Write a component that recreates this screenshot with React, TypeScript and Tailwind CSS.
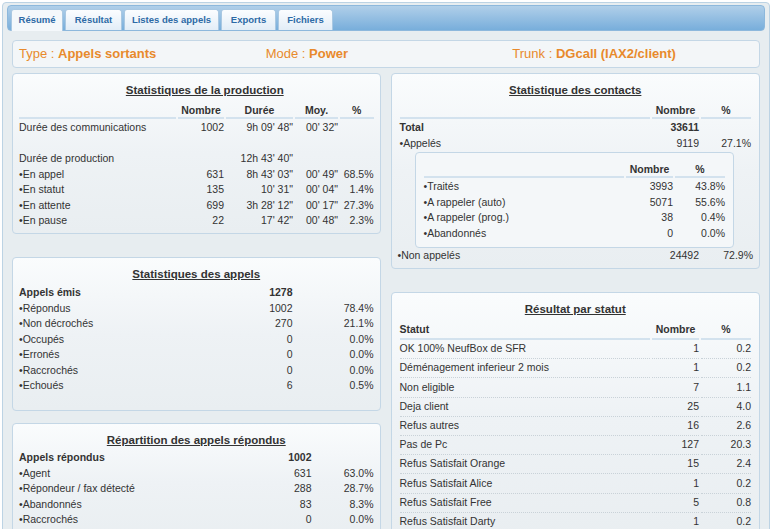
import React from "react";

const tabs = ["Résumé", "Résultat", "Listes des appels", "Exports", "Fichiers"];
const tabWidths = ["w-[52px]", "w-[57px]", "w-[95px]", "w-[55px]", "w-[55px]"];

const production = [
  { label: "•En appel", n: "631", d: "8h 43' 03\"", m: "00' 49\"", p: "68.5%" },
  { label: "•En statut", n: "135", d: "10' 31\"", m: "00' 04\"", p: "1.4%" },
  { label: "•En attente", n: "699", d: "3h 28' 12\"", m: "00' 17\"", p: "27.3%" },
  { label: "•En pause", n: "22", d: "17' 42\"", m: "00' 48\"", p: "2.3%" },
];

const appels = [
  ["•Répondus", "1002", "78.4%"],
  ["•Non décrochés", "270", "21.1%"],
  ["•Occupés", "0", "0.0%"],
  ["•Erronés", "0", "0.0%"],
  ["•Raccrochés", "0", "0.0%"],
  ["•Echoués", "6", "0.5%"],
];

const repondus = [
  ["•Agent", "631", "63.0%"],
  ["•Répondeur / fax détecté", "288", "28.7%"],
  ["•Abandonnés", "83", "8.3%"],
  ["•Raccrochés", "0", "0.0%"],
];

const appeles = [
  ["•Traités", "3993", "43.8%"],
  ["•A rappeler (auto)", "5071", "55.6%"],
  ["•A rappeler (prog.)", "38", "0.4%"],
  ["•Abandonnés", "0", "0.0%"],
];

const statuts = [
  ["OK 100% NeufBox de SFR", "1", "0.2"],
  ["Déménagement inferieur 2 mois", "1", "0.2"],
  ["Non eligible", "7", "1.1"],
  ["Deja client", "25", "4.0"],
  ["Refus autres", "16", "2.6"],
  ["Pas de Pc", "127", "20.3"],
  ["Refus Satisfait Orange", "15", "2.4"],
  ["Refus Satisfait Alice", "1", "0.2"],
  ["Refus Satisfait Free", "5", "0.8"],
  ["Refus Satisfait Darty", "1", "0.2"],
];

const Panel = ({
  title,
  className,
  titleClass = "",
  children,
}: {
  title: string;
  className?: string;
  titleClass?: string;
  children: React.ReactNode;
}) => (
  <div
    className={`rounded-[4px] border border-[#c4d7e6] bg-gradient-to-b from-[#fafcfd] via-[#eef2f5] to-[#e9eef1] px-[6px] pt-[9px] pb-[6px] ${className ?? ""}`}
  >
    <div className={`text-center text-[11.5px] font-bold leading-[14px] text-[#333] underline ${titleClass}`}>{title}</div>
    {children}
  </div>
);

const th = "font-bold text-center border-b-2 border-[#d3e2ee] px-0 pb-0 leading-[14px]";

const App = () => {
  return (
    <div className="h-[529px] w-[773px] overflow-hidden bg-white font-['Liberation_Sans',Arial,sans-serif] text-[10.5px] text-[#333]">
      <div className="ml-[2px] mt-[2px] h-[540px] w-[768px] rounded-t-[4px] border border-[#bcd3e4] bg-[#e7edf0] px-[4px] pt-[2px]">
        {/* tab bar */}
        <div className="flex h-[26px] items-end gap-[2px] rounded-[4px] border border-[#8db8dc] bg-gradient-to-b from-[#b0cfe9] to-[#78aedb] pl-[3px]">
          {tabs.map((t, i) => (
            <div
              key={t}
              className={`flex items-center justify-center whitespace-nowrap rounded-t-[3px] border border-b-0 border-[#a9c8e2] text-[9.5px] font-bold text-[#2d6aa6] ${tabWidths[i]} ${
                i === 0 ? "mb-[-1px] h-[22px] bg-[#f4f8fb]" : "h-[21px] bg-gradient-to-b from-[#fbfdff] to-[#e2edf7]"
              }`}
            >
              {t}
            </div>
          ))}
        </div>

        <div className="px-[5px]">
          {/* info bar */}
          <div className="mt-[9px] grid h-[28px] grid-cols-3 items-center rounded-[4px] border border-[#c4d7e6] bg-[#f3f6f8] px-[6px] text-[13px] text-[#e88a2c]">
            <div>
              Type : <b>Appels sortants</b>
            </div>
            <div className="pl-[2px]">
              Mode : <b>Power</b>
            </div>
            <div className="pl-[4px]">
              Trunk : <b>DGcall (IAX2/client)</b>
            </div>
          </div>

          <div className="mt-[5px] flex gap-[10px]">
            {/* left column */}
            <div className="flex w-[369px] flex-col">
              <Panel title="Statistiques de la production" className="h-[161px]" titleClass="pl-[17px]">
                <table className="mx-[-2px] w-[calc(100%+4px)] table-fixed border-separate border-spacing-x-[2px] border-spacing-y-0">
                  <colgroup>
                    <col className="w-[157px]" />
                    <col className="w-[46px]" />
                    <col className="w-[67px]" />
                    <col className="w-[43px]" />
                    <col />
                  </colgroup>
                  <thead>
                    <tr>
                      <th className="border-b-2 border-[#d3e2ee]"></th>
                      <th className={`${th} pt-[6px]`}>Nombre</th>
                      <th className={`${th} pt-[6px]`}>Durée</th>
                      <th className={`${th} pt-[6px]`}>Moy.</th>
                      <th className={`${th} pt-[6px]`}>%</th>
                    </tr>
                  </thead>
                  <tbody className="whitespace-nowrap leading-[15.5px]">
                    <tr>
                      <td className="pt-[1px]">Durée des communications</td>
                      <td className="pt-[1px] text-right">1002</td>
                      <td className="pt-[1px] text-right">9h 09' 48"</td>
                      <td className="pt-[1px] text-right">00' 32"</td>
                      <td></td>
                    </tr>
                    <tr>
                      <td className="h-[15.5px]"></td>
                    </tr>
                    <tr>
                      <td>Durée de production</td>
                      <td></td>
                      <td className="text-right">12h 43' 40"</td>
                      <td></td>
                      <td></td>
                    </tr>
                    {production.map((r) => (
                      <tr key={r.label}>
                        <td>{r.label}</td>
                        <td className="text-right">{r.n}</td>
                        <td className="text-right">{r.d}</td>
                        <td className="text-right">{r.m}</td>
                        <td className="text-right">{r.p}</td>
                      </tr>
                    ))}
                  </tbody>
                </table>
              </Panel>

              <Panel title="Statistiques des appels" className="mt-[23px] h-[154px]">
                <table className="mt-[4px] w-full border-collapse leading-[15.5px]">
                  <tbody>
                    <tr className="font-bold">
                      <td className="w-[210px]">Appels émis</td>
                      <td className="text-right">1278</td>
                      <td className="w-[81px]"></td>
                    </tr>
                    {appels.map((r) => (
                      <tr key={r[0]}>
                        <td>{r[0]}</td>
                        <td className="text-right">{r[1]}</td>
                        <td className="text-right">{r[2]}</td>
                      </tr>
                    ))}
                  </tbody>
                </table>
              </Panel>

              <Panel title="Répartition des appels répondus" className="mt-[12px] h-[120px]">
                <table className="mt-[3px] w-full border-collapse leading-[15.5px]">
                  <tbody>
                    <tr className="font-bold">
                      <td className="w-[230px]">Appels répondus</td>
                      <td className="text-right">1002</td>
                      <td className="w-[62px]"></td>
                    </tr>
                    {repondus.map((r) => (
                      <tr key={r[0]}>
                        <td>{r[0]}</td>
                        <td className="text-right">{r[1]}</td>
                        <td className="text-right">{r[2]}</td>
                      </tr>
                    ))}
                  </tbody>
                </table>
              </Panel>
            </div>

            {/* right column */}
            <div className="flex w-[370px] flex-col">
              <Panel title="Statistique des contacts" className="h-[196px]">
                <table className="w-full border-separate border-spacing-x-[2px] border-spacing-y-0">
                  <thead>
                    <tr>
                      <th className="border-b-2 border-[#d3e2ee]"></th>
                      <th className={`${th} w-[47px] pt-[6px]`}>Nombre</th>
                      <th className={`${th} w-[50px] pt-[6px]`}>%</th>
                    </tr>
                  </thead>
                  <tbody className="leading-[15.5px]">
                    <tr className="font-bold">
                      <td className="pt-[1px]">Total</td>
                      <td className="pt-[1px] text-right">33611</td>
                      <td></td>
                    </tr>
                    <tr>
                      <td>•Appelés</td>
                      <td className="text-right">9119</td>
                      <td className="text-right">27.1%</td>
                    </tr>
                  </tbody>
                </table>
                <div className="ml-[17px] mr-[19px] mt-[1px] rounded-[4px] border border-[#c4d7e6] bg-[#f4f7f9] px-[6px] pb-[6px]">
                  <table className="w-full border-separate border-spacing-x-[2px] border-spacing-y-0">
                    <thead>
                      <tr>
                        <th className="border-b-2 border-[#d3e2ee]"></th>
                        <th className={`${th} w-[47px] pt-[9px]`}>Nombre</th>
                        <th className={`${th} w-[50px] pt-[9px]`}>%</th>
                      </tr>
                    </thead>
                    <tbody className="leading-[15.5px]">
                      {appeles.map((r, i) => (
                        <tr key={r[0]}>
                          <td className={i === 0 ? "pt-[1px]" : ""}>{r[0]}</td>
                          <td className={`text-right ${i === 0 ? "pt-[1px]" : ""}`}>{r[1]}</td>
                          <td className={`text-right ${i === 0 ? "pt-[1px]" : ""}`}>{r[2]}</td>
                        </tr>
                      ))}
                    </tbody>
                  </table>
                </div>
                <div className="flex leading-[15.5px]">
                  <span className="flex-1">•Non appelés</span>
                  <span className="w-[47px] text-right">24492</span>
                  <span className="ml-[2px] w-[52px] text-right">72.9%</span>
                </div>
              </Panel>

              <Panel title="Résultat par statut" className="mt-[23px] h-[250px]">
                <table className="w-full border-separate border-spacing-x-[2px] border-spacing-y-0">
                  <thead>
                    <tr>
                      <th className="border-b-2 border-[#d3e2ee] pt-[6px] pb-[2px] text-left font-bold leading-[14px]">Statut</th>
                      <th className={`${th} w-[47px] pt-[6px] !pb-[2px]`}>Nombre</th>
                      <th className={`${th} w-[50px] pt-[6px] !pb-[2px]`}>%</th>
                    </tr>
                  </thead>
                  <tbody>
                    {statuts.map((r) => (
                      <tr key={r[0]} className="h-[19.2px]">
                        <td className="border-b border-dotted border-[#c9d2d8]">{r[0]}</td>
                        <td className="border-b border-dotted border-[#c9d2d8] text-right">{r[1]}</td>
                        <td className="border-b border-dotted border-[#c9d2d8] text-right">{r[2]}</td>
                      </tr>
                    ))}
                  </tbody>
                </table>
              </Panel>
            </div>
          </div>
        </div>
      </div>
    </div>
  );
};

export default App;
